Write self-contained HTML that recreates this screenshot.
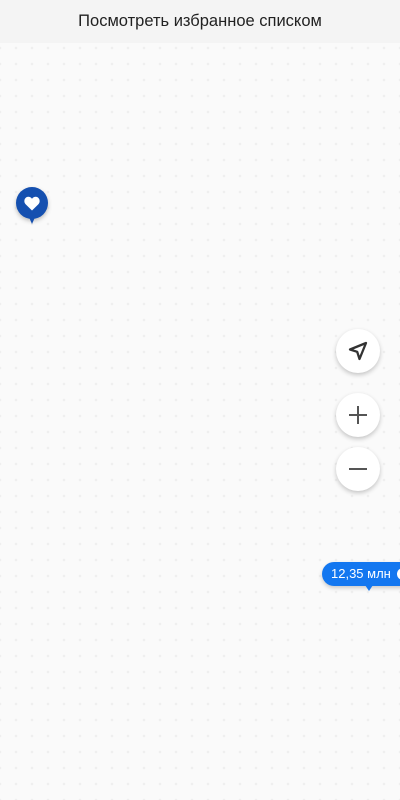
<!DOCTYPE html>
<html><head><meta charset="utf-8"><style>
*{margin:0;padding:0;box-sizing:border-box}
body{width:400px;height:800px;overflow:hidden;position:relative;font-family:"Liberation Sans","DejaVu Sans",sans-serif;
background-color:#fafafa;background-image:radial-gradient(circle,#efefef 1.1px,transparent 1.5px);background-size:16px 16px;background-position:-8px 40px}
.hdr{position:absolute;left:0;top:0;width:400px;height:43px;background:#f4f4f4;text-align:center;line-height:43px;font-size:16.5px;color:#222}
.btn{position:absolute;left:336px;width:44px;height:44px;border-radius:50%;background:#fff;box-shadow:0 2px 5px rgba(0,0,0,.22);display:flex;align-items:center;justify-content:center}
.pin{position:absolute;left:16px;top:187px;width:32px;height:32px;border-radius:50%;background:#1550b0;box-shadow:0 2px 4px rgba(0,0,0,.25);display:flex;align-items:center;justify-content:center}
.pin:after{content:"";position:absolute;left:12px;top:28px;border:4px solid transparent;border-top:9px solid #1550b0}
.tag{position:absolute;left:322px;top:562px;width:100px;height:24px;border-radius:12px;background:#1377f0;color:#fff;font-size:13px;line-height:24px;padding-left:9px;box-shadow:0 2px 4px rgba(0,0,0,.2)}
.tag:after{content:"";position:absolute;left:43px;top:23px;border:4px solid transparent;border-top:6px solid #1377f0}
.dot{position:absolute;left:75px;top:6px;width:12px;height:12px;border-radius:50%;background:#fff}
</style></head><body>
<div class="hdr">Посмотреть избранное списком</div>
<div class="pin"><svg width="16" height="15" viewBox="0 0 16 15"><path d="M8 14.5L1.6 8.2C-.4 6.2.1 2.6 2.4 1.3 4.4.2 6.7 1 8 2.8 9.3 1 11.6.2 13.6 1.3c2.3 1.3 2.8 4.9.8 6.9z" fill="#fff"/></svg></div>
<div class="btn" style="top:329px"><svg width="22" height="22" viewBox="0 0 22 22"><path d="M19 3L3 9.5l7.2 2.3L12.5 19z" fill="none" stroke="#333" stroke-width="2.3" stroke-linejoin="round"/></svg></div>
<div class="btn" style="top:393px"><svg width="20" height="20" viewBox="0 0 20 20"><path d="M10 1v18M1 10h18" stroke="#555" stroke-width="2"/></svg></div>
<div class="btn" style="top:447px"><svg width="20" height="20" viewBox="0 0 20 20"><path d="M1 10h18" stroke="#555" stroke-width="2"/></svg></div>
<div class="tag">12,35 млн<div class="dot"></div></div>
</body></html>
